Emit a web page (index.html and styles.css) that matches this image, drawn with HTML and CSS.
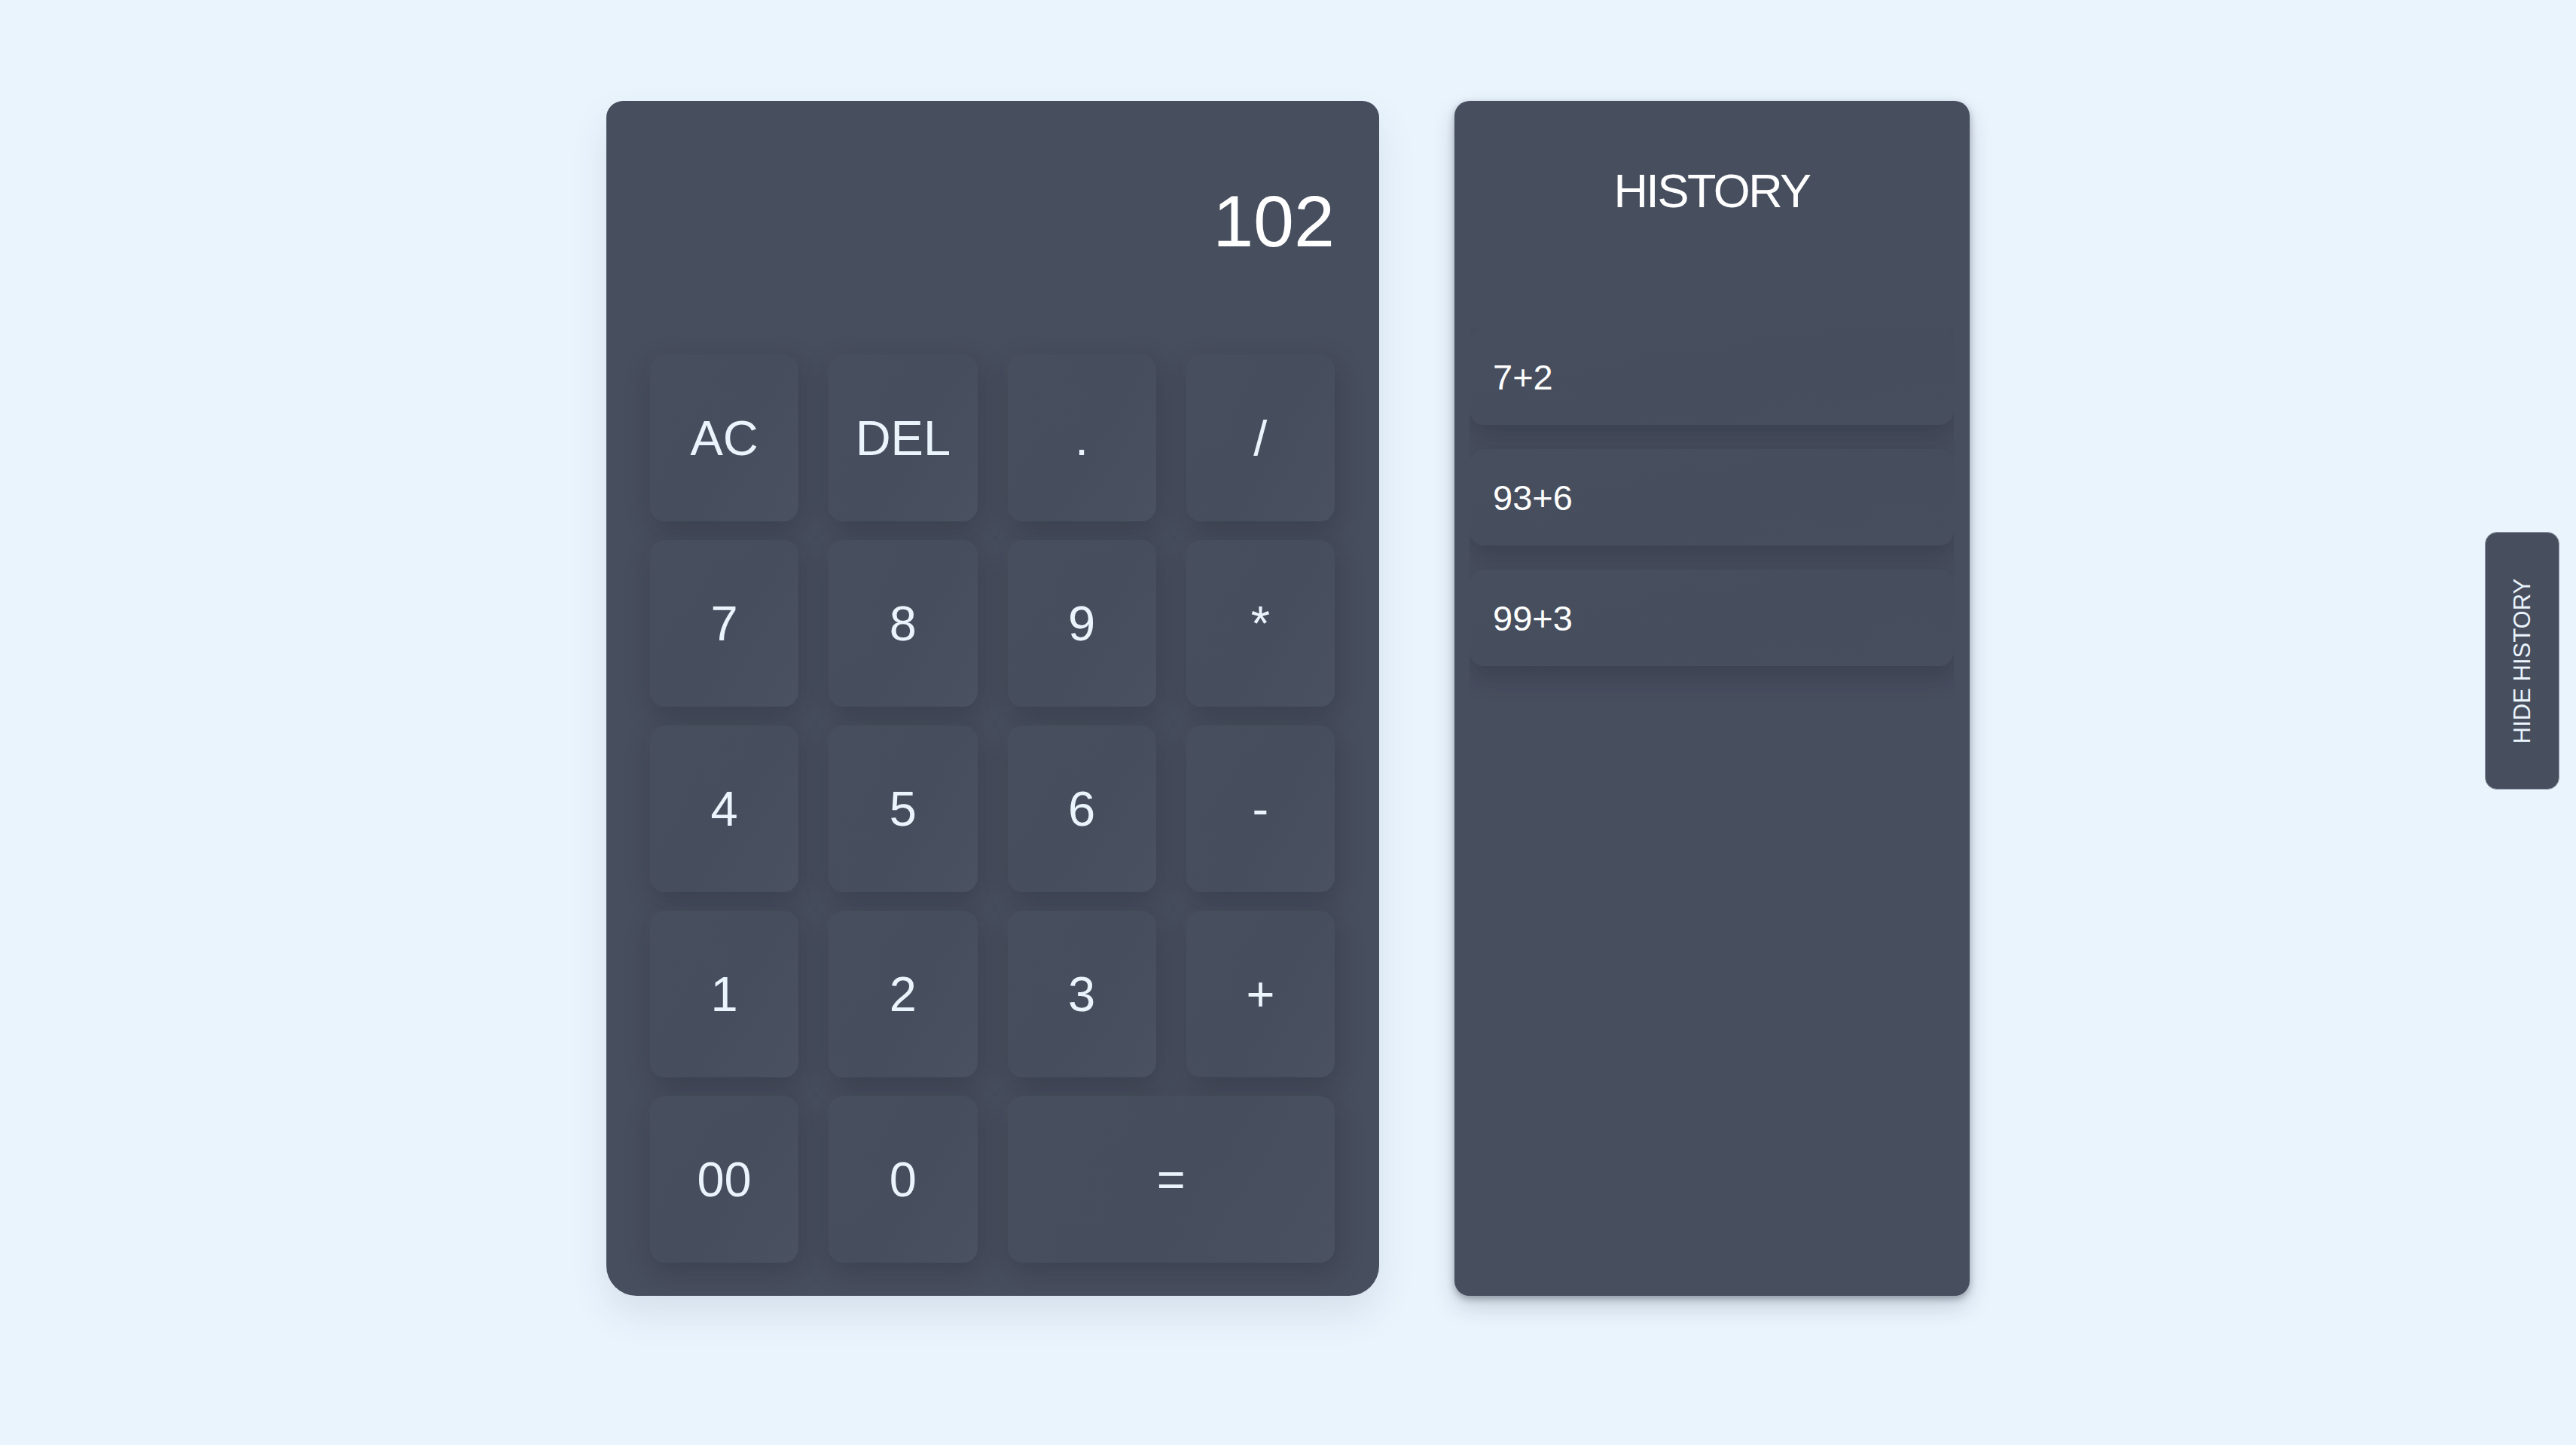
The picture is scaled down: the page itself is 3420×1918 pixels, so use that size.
FILE: index.html
```html
<!DOCTYPE html>
<html lang="en">
<head>
<meta charset="utf-8">
<title>Calculator</title>
<link rel="stylesheet" href="styles.css">
</head>
<body>
<main class="app">
  <section class="calc">
    <div class="display">102</div>
    <div class="keys">
      <button class="key">AC</button>
      <button class="key">DEL</button>
      <button class="key">.</button>
      <button class="key">/</button>
      <button class="key">7</button>
      <button class="key">8</button>
      <button class="key">9</button>
      <button class="key">*</button>
      <button class="key">4</button>
      <button class="key">5</button>
      <button class="key">6</button>
      <button class="key">-</button>
      <button class="key">1</button>
      <button class="key">2</button>
      <button class="key">3</button>
      <button class="key">+</button>
      <button class="key">00</button>
      <button class="key">0</button>
      <button class="key key-wide">=</button>
    </div>
  </section>
  <aside class="history">
    <h2 class="history-title">HISTORY</h2>
    <ul class="history-list">
      <li class="history-item">7+2</li>
      <li class="history-item">93+6</li>
      <li class="history-item">99+3</li>
    </ul>
  </aside>
</main>
<button class="toggle"><span class="toggle-text">HIDE HISTORY</span></button>
</body>
</html>
```

FILE: styles.css
```css
html, body {
  margin: 0;
  padding: 0;
}
body {
  background: #eaf4fd;
  font-family: "Liberation Sans", Arial, Helvetica, sans-serif;
  width: 3420px;
  height: 1918px;
  overflow: hidden;
}
.app {
  display: flex;
  justify-content: center;
  align-items: flex-start;
  gap: 100px;
  padding-top: 134px;
}
.calc {
  box-sizing: border-box;
  width: 1026px;
  height: 1586px;
  padding: 0 59px 44px 58px;
  background: #474e5e;
  border-radius: 22px 22px 40px 40px;
  box-shadow: 0 24px 50px rgba(40, 60, 90, 0.10);
  display: flex;
  flex-direction: column;
}
.display {
  height: 337px;
  box-sizing: border-box;
  padding-top: 111px;
  text-align: right;
  color: #ffffff;
  font-size: 97px;
  line-height: 1;
}
.keys {
  display: grid;
  grid-template-columns: repeat(4, 1fr);
  grid-auto-rows: 221px;
  column-gap: 40px;
  row-gap: 25px;
}
.key {
  border: none;
  margin: 0;
  padding: 0;
  border-radius: 20px;
  background: linear-gradient(120deg, #474e5e 0%, #464d5d 55%, #4a5161 100%);
  color: #eaf4fd;
  font-family: "Liberation Sans", Arial, Helvetica, sans-serif;
  font-size: 65px;
  line-height: 1;
  box-shadow: 3px 10px 36px rgba(15, 20, 30, 0.24), -4px -4px 16px rgba(255, 255, 255, 0.02);
}
.key-wide {
  grid-column: span 2;
}
.history {
  box-sizing: border-box;
  width: 684px;
  height: 1586px;
  padding: 88px 21px 0 20px;
  background: #474e5e;
  border-radius: 20px;
  box-shadow: 0 4px 10px rgba(30, 40, 55, 0.35), 0 14px 30px rgba(30, 40, 55, 0.18);
  display: flex;
  flex-direction: column;
}
.history-title {
  margin: 0;
  text-align: center;
  color: #ffffff;
  font-weight: normal;
  font-size: 63px;
  letter-spacing: -2.5px;
  line-height: 1;
}
.history-list {
  list-style: none;
  margin: 151px 0 0;
  padding: 0 0 60px;
  display: flex;
  flex-direction: column;
  gap: 32px;
  overflow: hidden;
}
.history-item {
  height: 128px;
  box-sizing: border-box;
  padding-left: 31px;
  display: flex;
  align-items: center;
  border-radius: 20px;
  background: linear-gradient(170deg, #474e5e 0%, #464d5d 60%, #474e5e 100%);
  color: #ffffff;
  font-size: 47px;
  box-shadow: 0 16px 30px rgba(20, 25, 35, 0.22);
}
.toggle {
  position: fixed;
  top: 706px;
  right: 22px;
  width: 99px;
  height: 342px;
  box-sizing: border-box;
  margin: 0;
  padding: 0;
  border: 1px solid #8f98a6;
  border-radius: 16px;
  background: #474e5e;
  display: flex;
  align-items: center;
  justify-content: center;
}
.toggle-text {
  display: block;
  transform: rotate(-90deg);
  white-space: nowrap;
  color: #eaf4fd;
  font-family: "Liberation Sans", Arial, Helvetica, sans-serif;
  font-size: 31px;
  line-height: 1;
}
```
